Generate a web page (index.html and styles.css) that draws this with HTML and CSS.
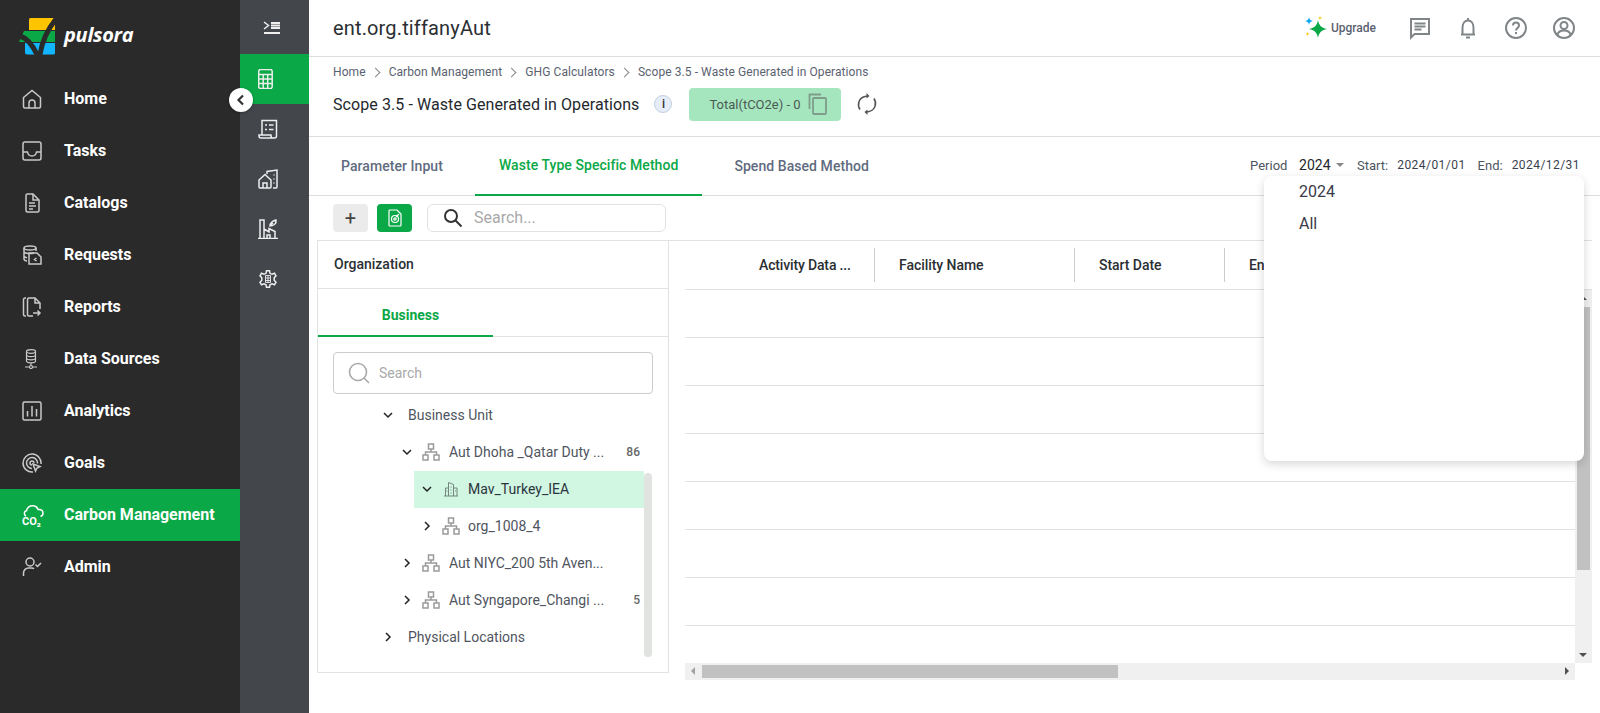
FILE: index.html
```html
<!DOCTYPE html>
<html lang="en">
<head>
    <meta charset="UTF-8">
    <title>Scope 3.5 - Waste Generated in Operations</title>
    <link rel="stylesheet" href="styles.css">
</head>
<body>
<div class="app">
    <aside class="sidebar">
        <div class="brand">
            <svg class="brand-mark" width="38" height="38" viewBox="0 0 38 38">
                <path d="M10 1.500a1.500 1.500 0 0 1 1.500-1.500H36v12H10z" fill="#ffc400"/>
                <path d="M5 13h31v11H0z" fill="#0aa846"/>
                <path d="M6 25h30v10a1.500 1.500 0 0 1-1.500 1.500H8a2 2 0 0 1-2-2z" fill="#12b5ff"/>
                <path d="M1 18c7 2 12 8 17 18.500h3C23 24 28 12 37 1" fill="none" stroke="#2a2a2a" stroke-width="5"/>
            </svg>
            <span class="brand-name">pulsora</span>
        </div>
        <ul class="nav">
            <li class="nav-item">
                <svg class="nav-icon" viewBox="0 0 20 20"><path d="M1.500 8.500 10 1.500l8.500 7v9a1.500 1.500 0 0 1-1.500 1.500H3a1.500 1.500 0 0 1-1.500-1.500z"/><path d="M7 19v-5a3 3 0 0 1 6 0v5"/></svg>
                <span>Home</span>
            </li>
            <li class="nav-item">
                <svg class="nav-icon" viewBox="0 0 20 20"><rect x="1" y="1" width="18" height="18" rx="2"/><path d="M1 11h4.500c.5 3 2 4 4.500 4s4-1 4.500-4H19"/></svg>
                <span>Tasks</span>
            </li>
            <li class="nav-item">
                <svg class="nav-icon" viewBox="0 0 20 20"><path d="M17 7v10.500a1.500 1.500 0 0 1-1.500 1.500h-10A1.500 1.500 0 0 1 4 17.500v-15A1.500 1.500 0 0 1 5.500 1H11z"/><path d="M11 1v6h6M7 10h6M7 13h7M7 16h4"/></svg>
                <span>Catalogs</span>
            </li>
            <li class="nav-item">
                <svg class="nav-icon" viewBox="0 0 20 20"><ellipse cx="8" cy="3" rx="6" ry="2"/><path d="M2 3v11c0 1 1.500 1.800 3 2M14 3v3M2 7c1 1.500 7 2 10 1M2 11c.5 1 1.500 1.500 3 1.800"/><path d="M7 8h8l4 4v7H7zM14.500 13l-2 1.500 2 1.500"/></svg>
                <span>Requests</span>
            </li>
            <li class="nav-item">
                <svg class="nav-icon" viewBox="0 0 20 20"><path d="M4 1H3a1.500 1.500 0 0 0-1.500 1.500v15A1.500 1.500 0 0 0 3 19h1"/><path d="M11 19H7a1.500 1.500 0 0 1-1.500-1.500v-15A1.500 1.500 0 0 1 7 1h6l5 5v6M13 1v5h5"/><path d="M11 16h7M15.500 13.500 18 16l-2.500 2.500"/></svg>
                <span>Reports</span>
            </li>
            <li class="nav-item">
                <svg class="nav-icon thin" viewBox="0 0 20 20"><ellipse cx="9" cy="2.500" rx="4.500" ry="1.800"/><path d="M4.500 2.500v9.500c0 1 2 1.800 4.500 1.800s4.500-.8 4.500-1.800V2.500M4.500 5.800c0 1 2 1.800 4.500 1.800s4.500-.8 4.500-1.800M4.500 9c0 1 2 1.800 4.500 1.800s4.500-.8 4.500-1.800M9 13.800v2.700M3 18h4.500M10.500 18H15"/><circle cx="9" cy="18" r="1.500"/></svg>
                <span>Data Sources</span>
            </li>
            <li class="nav-item">
                <svg class="nav-icon" viewBox="0 0 20 20"><rect x="1" y="1" width="18" height="18" rx="1.500"/><path d="M5.500 10v5.500M10 5v10.500M14.500 8v7.500"/></svg>
                <span>Analytics</span>
            </li>
            <li class="nav-item">
                <svg class="nav-icon" viewBox="0 0 20 20"><path d="M19 11a9 9 0 1 0-8 8M15.500 10.500A5.500 5.500 0 1 0 10 15.500M12 10a2 2 0 1 0-2 2"/><path d="M11 11l7 2.500-3 1.500-1.500 3z"/></svg>
                <span>Goals</span>
            </li>
            <li class="nav-item active">
                <svg class="nav-icon co2-icon" viewBox="0 0 20 20"><path d="M4 11C1.500 10 2 6 4.500 5.800 5 2.500 8 .2 11.500 .8c2.500.3 4 2 4.500 3.700 3-.5 5 1 5 3.500 0 2-1 3-2.500 3.500"/><text x="0" y="20" class="co2-text">CO₂</text></svg>
                <span>Carbon Management</span>
            </li>
            <li class="nav-item">
                <svg class="nav-icon" viewBox="0 0 20 20"><circle cx="8" cy="5" r="4"/><path d="M1.500 19v-3c0-3 2.500-5 5-5h3c1 0 2 .3 2.500.8M13.500 7.500l2 2 3.500-3.500"/></svg>
                <span>Admin</span>
            </li>
        </ul>
    </aside>

    <nav class="rail">
        <div class="rail-item toggle">
            <svg class="rail-icon" viewBox="0 0 20 20"><path d="M2 5l4.500 3.500L2 12" fill="none"/><path d="M9 6h9M9 8.500h9M9 11h9M2 16h16" stroke-width="1.800"/></svg>
        </div>
        <div class="rail-item current">
            <svg class="rail-icon" viewBox="0 0 20 20"><rect x=".7" y=".5" width="13.500" height="19" rx="2"/><path d="M.7 5.500h13.500M.7 10h13.500M.7 14.500h13.500M5.200 5.500V19.500M9.700 5.500V19.500"/></svg>
        </div>
        <div class="rail-item">
            <svg class="rail-icon" viewBox="0 0 20 20"><path d="M4 16V1.500h14.500V17a2 2 0 0 1-2 2H3a2 2 0 0 1-2-2v-1h12v1a2 2 0 0 0 2 2"/><path d="M7 6h2M11 6h4.500M7 10.500h2M11 10.500h4.500"/></svg>
        </div>
        <div class="rail-item">
            <svg class="rail-icon" viewBox="0 0 20 20"><path d="M1 11 7 5.500l6 5.500v7a1 1 0 0 1-1 1H2a1 1 0 0 1-1-1z"/><path d="M5 19v-5h4v5M9 5V2.500L19 1v17a1 1 0 0 1-1 1h-3M15.500 6h1M15.500 10h1M15.500 14h1"/></svg>
        </div>
        <div class="rail-item">
            <svg class="rail-icon" viewBox="0 0 20 20"><path d="M0 19.500h20M2 19V1h4v18M6 10l5 3V9.500l6 3V19M9 19v-3h3v3"/><path d="M12 7c0-3 3-5.500 6-6 .5 3-1.500 6-6 6zM12 7l3-3"/></svg>
        </div>
        <div class="rail-item">
            <svg class="rail-icon" viewBox="0 0 20 20"><path d="M8.500 1h3l.5 2.500 2 1 2.500-1 1.500 2.500-1.800 2v2.500L18 12.500 16.500 15l-2.500-1-2 1-.5 2.500h-3L8 15l-2-1-2.500 1L2 12.500l1.800-2V8L2 6l1.500-2.500 2.500 1 2-1z" transform="translate(0 .8)"/><path d="M7.500 6.500h5v7h-5zM10 6.500v7M7.500 9h5M7.500 11.500h5" stroke-width=".9"/></svg>
        </div>
    </nav>

    <button class="collapse-btn" type="button">
        <svg width="12" height="12" viewBox="0 0 12 12"><path d="M8 1.500 3.500 6 8 10.500" fill="none" stroke="#333" stroke-width="2.200"/></svg>
    </button>

    <main class="content">
        <header class="topbar">
            <h1 class="org-name">ent.org.tiffanyAut</h1>
            <div class="top-actions">
                <div class="upgrade">
                    <svg width="24" height="24" viewBox="0 0 24 24">
                        <path d="M14 4c1 5.500 3 7.500 9 9-6 1.500-8 3.500-9 9-1-5.500-3-7.500-9-9 6-1.500 8-3.500 9-9z" fill="#0aa846"/>
                        <path d="M5 1c.4 2.600 1.400 3.600 4 4-2.600.4-3.600 1.400-4 4-.4-2.600-1.400-3.600-4-4 2.600-.4 3.600-1.400 4-4z" fill="#12a5f0"/>
                        <path d="M16 0c.2 1.200.8 1.800 2 2-1.200.2-1.800.8-2 2-.2-1.200-.8-1.800-2-2 1.200-.2 1.800-.8 2-2zM3.500 16c.2 1.200.8 1.800 2 2-1.200.2-1.800.8-2 2-.2-1.200-.8-1.800-2-2 1.200-.2 1.800-.8 2-2z" fill="#ffc400"/>
                    </svg>
                    <span>Upgrade</span>
                </div>
                <svg class="top-icon" viewBox="0 0 24 24"><path d="M3 3h18v15H6.500L3 21.500z"/><path d="M6.500 7.500h11M6.500 10.500h11M6.500 13.500h7"/></svg>
                <svg class="top-icon" viewBox="0 0 24 24"><path d="M5 18.500h14M6.500 18.500v-7C6.500 7 9 4.500 12 4.500s5.500 2.500 5.500 7v7M12 2v2.500M10 21.500h4"/></svg>
                <svg class="top-icon" viewBox="0 0 24 24"><circle cx="12" cy="12" r="10"/><path d="M9 9.500C9 7.500 10.500 6.500 12 6.500s3 1 3 3c0 2.500-3 2.500-3 5M12 16v2"/></svg>
                <svg class="top-icon" viewBox="0 0 24 24"><circle cx="12" cy="12" r="10"/><circle cx="12" cy="9.500" r="3.500"/><path d="M5.500 19c.5-3 3-4.500 6.500-4.500s6 1.500 6.500 4.500"/></svg>
            </div>
        </header>

        <section class="page-head">
            <div class="breadcrumb">
                <span>Home</span><i class="crumb-sep"></i>
                <span>Carbon Management</span><i class="crumb-sep"></i>
                <span>GHG Calculators</span><i class="crumb-sep"></i>
                <span>Scope 3.5 - Waste Generated in Operations</span>
            </div>
            <div class="title-row">
                <h2 class="page-title">Scope 3.5 - Waste Generated in Operations</h2>
                <span class="info-dot">i</span>
                <div class="total-badge">
                    <span>Total(tCO2e) - 0</span>
                    <svg width="20" height="22" viewBox="0 0 20 22" fill="none" stroke="#7e9c8a" stroke-width="1.800"><path d="M1.500 16V1.500H13"/><rect x="5" y="5" width="13" height="16" rx="1"/></svg>
                </div>
                <svg class="refresh" width="24" height="24" viewBox="0 0 24 24" fill="none" stroke="#555" stroke-width="1.600"><path d="M5 17.500C2 13 3.500 6 10 4.500l3-.5"/><path d="M19 6.500c3 4.500 1.500 11.500-5 13l-3 .5"/><path d="M11.500 1 14.500 4l-3 2.500M12.500 17.500 9.500 20l3 3" fill="#555" stroke="none"/></svg>
            </div>
        </section>

        <section class="tabs-row">
            <div class="tabs">
                <span class="tab">Parameter Input</span>
                <span class="tab selected">Waste Type Specific Method</span>
                <span class="tab">Spend Based Method</span>
            </div>
            <div class="period">
                <span class="period-label">Period</span>
                <span class="period-value">2024<i class="caret"></i></span>
                <span class="date-label">Start:</span>
                <span class="date-value">2024/01/01</span>
                <span class="date-label">End:</span>
                <span class="date-value">2024/12/31</span>
            </div>
        </section>

        <section class="toolbar">
            <button class="tool-btn" type="button">+</button>
            <button class="tool-btn green" type="button">
                <svg width="16" height="18" viewBox="0 0 16 18" fill="none" stroke="#fff" stroke-width="1.200"><path d="M10 1H3a1 1 0 0 0-1 1v14a1 1 0 0 0 1 1h10a1 1 0 0 0 1-1V5z"/><circle cx="8" cy="10" r="3.500"/><circle cx="8" cy="10" r="1.200"/><path d="M9 8l3-3"/></svg>
            </button>
            <div class="tool-search">
                <svg width="20" height="20" viewBox="0 0 20 20" fill="none" stroke="#333" stroke-width="2"><circle cx="8" cy="8" r="6"/><path d="m12.500 12.500 6 6"/></svg>
                <span class="placeholder">Search...</span>
            </div>
        </section>

        <section class="panels">
            <div class="org-panel">
                <div class="org-title">Organization</div>
                <div class="org-tabs"><span class="org-tab">Business</span></div>
                <div class="org-search">
                    <svg width="22" height="22" viewBox="0 0 22 22" fill="none" stroke="#aaa" stroke-width="1.600"><circle cx="10" cy="10" r="8.500"/><path d="m16 16 5 5"/></svg>
                    <span class="placeholder">Search</span>
                </div>
                <div class="tree">
                    <ul class="tree-list">
                        <li class="tree-row lvl1">
                            <svg class="chev" viewBox="0 0 12 12"><path d="M2 4l4 4 4-4"/></svg>
                            <span class="node-name">Business Unit</span>
                        </li>
                        <li class="tree-row lvl2">
                            <svg class="chev" viewBox="0 0 12 12"><path d="M2 4l4 4 4-4"/></svg>
                            <svg class="org-icon" viewBox="0 0 18 18"><rect x="6.500" y="1" width="5" height="5"/><rect x="1" y="12" width="5" height="5"/><rect x="12" y="12" width="5" height="5"/><path d="M9 6v3M3.500 12V9h11v3"/></svg>
                            <span class="node-name">Aut Dhoha _Qatar Duty ...</span>
                            <span class="node-count">86</span>
                        </li>
                        <li class="tree-row lvl3 picked">
                            <svg class="chev" viewBox="0 0 12 12"><path d="M2 4l4 4 4-4"/></svg>
                            <svg class="site-icon" viewBox="0 0 16 16"><path d="M1 15h14M2.500 15V7h3M5.500 15V1.500l5 2V15M10.500 7h3.500v8M7.500 6h1M7.500 9h1M7.500 12h1M3.500 10h1M12 10h1"/></svg>
                            <span class="node-name">Mav_Turkey_IEA</span>
                        </li>
                        <li class="tree-row lvl3">
                            <svg class="chev" viewBox="0 0 12 12"><path d="M4 2l4 4-4 4"/></svg>
                            <svg class="org-icon" viewBox="0 0 18 18"><rect x="6.500" y="1" width="5" height="5"/><rect x="1" y="12" width="5" height="5"/><rect x="12" y="12" width="5" height="5"/><path d="M9 6v3M3.500 12V9h11v3"/></svg>
                            <span class="node-name">org_1008_4</span>
                        </li>
                        <li class="tree-row lvl2">
                            <svg class="chev" viewBox="0 0 12 12"><path d="M4 2l4 4-4 4"/></svg>
                            <svg class="org-icon" viewBox="0 0 18 18"><rect x="6.500" y="1" width="5" height="5"/><rect x="1" y="12" width="5" height="5"/><rect x="12" y="12" width="5" height="5"/><path d="M9 6v3M3.500 12V9h11v3"/></svg>
                            <span class="node-name">Aut NIYC_200 5th Aven...</span>
                        </li>
                        <li class="tree-row lvl2">
                            <svg class="chev" viewBox="0 0 12 12"><path d="M4 2l4 4-4 4"/></svg>
                            <svg class="org-icon" viewBox="0 0 18 18"><rect x="6.500" y="1" width="5" height="5"/><rect x="1" y="12" width="5" height="5"/><rect x="12" y="12" width="5" height="5"/><path d="M9 6v3M3.500 12V9h11v3"/></svg>
                            <span class="node-name">Aut Syngapore_Changi ...</span>
                            <span class="node-count">5</span>
                        </li>
                        <li class="tree-row lvl1">
                            <svg class="chev" viewBox="0 0 12 12"><path d="M4 2l4 4-4 4"/></svg>
                            <span class="node-name">Physical Locations</span>
                        </li>
                    </ul>
                    <div class="tree-scroll"></div>
                </div>
            </div>

            <div class="grid-panel">
                <div class="grid-head">
                    <div class="col col-activity">Activity Data ...</div>
                    <div class="col col-facility">Facility Name</div>
                    <div class="col col-start">Start Date</div>
                    <div class="col col-end">End Date</div>
                </div>
                <div class="grid-main">
                    <div class="grid-rows">
                        <div class="grid-row"></div>
                        <div class="grid-row"></div>
                        <div class="grid-row"></div>
                        <div class="grid-row"></div>
                        <div class="grid-row"></div>
                        <div class="grid-row"></div>
                        <div class="grid-row"></div>
                    </div>
                    <div class="vscroll">
                        <i class="arrow-up"></i>
                        <div class="vthumb"></div>
                        <i class="arrow-down"></i>
                    </div>
                </div>
                <div class="hscroll">
                    <i class="arrow-left"></i>
                    <div class="hthumb"></div>
                    <i class="arrow-right"></i>
                </div>
            </div>
        </section>

        <div class="period-menu">
            <div class="menu-item">2024</div>
            <div class="menu-item">All</div>
        </div>
    </main>
</div>
</body>
</html>
```

FILE: styles.css
```css
* {
    box-sizing: border-box;
}
body {
    margin: 0;
    font-family: Roboto, "Liberation Sans", sans-serif;
    background-color: #fff;
    color: #333;
    overflow: hidden;
}
ul {
    list-style: none;
    margin: 0;
    padding: 0;
}
h1, h2 {
    margin: 0;
    font-weight: 400;
}
i {
    font-style: normal;
}
.app {
    position: relative;
    display: flex;
    height: 713px;
}

/* main sidebar */
.sidebar {
    width: 240px;
    flex-shrink: 0;
    background-color: #2a2a2a;
    color: #fff;
}
.brand {
    display: flex;
    align-items: center;
    height: 73px;
    padding-left: 19px;
}
.brand-mark {
    flex-shrink: 0;
}
.brand-name {
    margin: 0 0 4px 7px;
    font-family: "Open Sans", sans-serif;
    font-size: 20px;
    font-style: italic;
    font-weight: 700;
    letter-spacing: -0.3px;
}
.nav-item {
    display: flex;
    align-items: center;
    gap: 22px;
    height: 52px;
    padding-left: 22px;
    font-size: 16px;
    font-weight: 700;
}
.nav-item span {
    margin-bottom: 2px;
}
.nav-item.active {
    background-color: #0aa846;
}
.nav-icon {
    width: 20px;
    height: 20px;
    flex-shrink: 0;
    fill: none;
    stroke: #c9c9c9;
    stroke-width: 1.500;
}
.nav-icon.thin {
    stroke-width: 1.200;
}
.nav-item.active .nav-icon {
    stroke: #fff;
}
.co2-icon {
    overflow: visible;
}
.co2-text {
    fill: #fff;
    stroke: none;
    font-size: 11px;
    font-weight: 700;
}

/* icon rail */
.rail {
    width: 69px;
    flex-shrink: 0;
    background-color: #43474b;
}
.rail-item {
    display: flex;
    align-items: center;
    height: 50px;
    padding-left: 18px;
}
.rail-item.toggle {
    height: 54px;
    padding-left: 22px;
}
.rail-item.current {
    background-color: #0aa846;
}
.rail-icon {
    width: 20px;
    height: 20px;
    fill: none;
    stroke: #eee;
    stroke-width: 1.500;
}
.collapse-btn {
    position: absolute;
    left: 229px;
    top: 88px;
    z-index: 3;
    display: flex;
    align-items: center;
    justify-content: center;
    width: 24px;
    height: 24px;
    padding: 0;
    border: none;
    border-radius: 50%;
    background-color: #fff;
    box-shadow: 0 1px 3px rgba(0, 0, 0, 0.3);
}

/* content */
.content {
    position: relative;
    flex: 1;
    min-width: 0;
}
.topbar {
    display: flex;
    align-items: center;
    justify-content: space-between;
    height: 57px;
    padding: 0 24px;
    border-bottom: 1px solid #ddd;
}
.org-name {
    font-size: 20px;
    letter-spacing: 0.15px;
    color: #2b2f33;
}
.top-actions {
    display: flex;
    align-items: center;
    gap: 24px;
}
.upgrade {
    display: flex;
    align-items: center;
    gap: 3px;
    margin-right: 8px;
    font-size: 12px;
    font-weight: 500;
    color: #5a6270;
}
.top-icon {
    width: 24px;
    height: 24px;
    fill: none;
    stroke: #808588;
    stroke-width: 2;
}
.page-head {
    height: 80px;
    padding: 7px 24px 0;
    border-bottom: 1px solid #ddd;
}
.breadcrumb {
    display: flex;
    align-items: center;
    height: 16px;
    font-size: 12px;
    letter-spacing: 0.08px;
    color: #5a6270;
}
.crumb-sep {
    width: 7px;
    height: 7px;
    margin: 0 10px 0 6px;
    border-top: 1.500px solid #888;
    border-right: 1.500px solid #888;
    transform: rotate(45deg);
}
.title-row {
    display: flex;
    align-items: center;
    height: 36px;
    margin-top: 6px;
}
.page-title {
    font-size: 16px;
    letter-spacing: 0.08px;
    color: #24282c;
}
.info-dot {
    display: flex;
    align-items: center;
    justify-content: center;
    width: 18px;
    height: 18px;
    margin-left: 15px;
    border: 1px solid #c3cfe0;
    border-radius: 50%;
    background-color: #e6edf8;
    font-size: 12px;
    font-weight: 500;
}
.total-badge {
    display: flex;
    align-items: center;
    gap: 7px;
    width: 152px;
    height: 33px;
    margin-left: 17px;
    padding-left: 20px;
    border-radius: 4px;
    background-color: #a6e6bf;
    font-size: 13px;
    color: #4a5a55;
}
.refresh {
    margin-left: 14px;
}
.tabs-row {
    display: flex;
    align-items: center;
    justify-content: space-between;
    height: 59px;
    padding-left: 8px;
    border-bottom: 1px solid #ddd;
}
.tabs {
    display: flex;
    align-self: stretch;
}
.tab {
    display: flex;
    align-items: center;
    margin-top: -1px;
    padding: 0 24px;
    font-size: 14px;
    font-weight: 500;
    letter-spacing: 0.06px;
    color: #5f6b80;
    margin-right: 8px;
}
.tab.selected {
    color: #0aa846;
    border-bottom: 2px solid #0aa846;
    margin-bottom: -1px;
}
.period {
    display: flex;
    align-items: center;
    height: 20px;
    margin-top: -2px;
    padding-right: 20px;
    font-size: 13px;
    color: #4d5560;
}
.period-label {
    width: 49px;
}
.period-value {
    display: flex;
    align-items: center;
    width: 58px;
    font-size: 14px;
    color: #24282c;
}
.caret {
    margin-left: 5px;
    border-left: 4px solid transparent;
    border-right: 4px solid transparent;
    border-top: 4px solid #888;
}
.date-label {
    margin-right: 9px;
    font-size: 13px;
}
.date-value {
    margin-right: 12px;
    font-size: 12px;
    letter-spacing: 0.45px;
    color: #3a3f50;
}
.date-value:last-child {
    margin-right: 0;
}
.toolbar {
    display: flex;
    align-items: center;
    height: 44px;
    padding: 0 24px 0 24px;
}
.tool-btn {
    display: flex;
    align-items: center;
    justify-content: center;
    width: 35px;
    height: 28px;
    margin-right: 9px;
    padding: 0;
    border: none;
    border-radius: 4px;
    background-color: #ebebeb;
    font-family: inherit;
    font-size: 20px;
    color: #444;
}
.tool-btn.green {
    background-color: #0aa846;
    margin-right: 15px;
}
.tool-search {
    display: flex;
    align-items: center;
    gap: 11px;
    width: 239px;
    height: 28px;
    padding-left: 15px;
    border: 1px solid #e2e2e2;
    border-radius: 6px;
}
.placeholder {
    margin-bottom: 1px;
    font-size: 16px;
    color: #a9a9a9;
}

/* organization panel */
.panels {
    display: flex;
    height: 440px;
    padding: 0 8px;
}
.org-panel {
    width: 352px;
    height: 433px;
    flex-shrink: 0;
    border: 1px solid #e2e2e2;
}
.org-title {
    display: flex;
    align-items: center;
    height: 48px;
    padding: 0 0 2px 16px;
    border-bottom: 1px solid #e2e2e2;
    font-size: 14px;
    font-weight: 500;
    color: #2b2f33;
}
.org-tabs {
    height: 48px;
    border-bottom: 1px solid #e2e2e2;
}
.org-tab {
    display: flex;
    align-items: center;
    justify-content: center;
    width: 175px;
    height: 48px;
    padding: 6px 0 0 10px;
    border-bottom: 2px solid #0aa846;
    font-size: 14px;
    font-weight: 700;
    color: #0aa846;
}
.org-search {
    display: flex;
    align-items: center;
    gap: 9px;
    width: 320px;
    height: 42px;
    margin: 15px 0 3px 15px;
    padding-left: 14px;
    border: 1px solid #ccc;
    border-radius: 4px;
}
.org-search .placeholder {
    font-size: 14px;
}
.tree {
    display: flex;
    align-items: flex-start;
}
.tree-list {
    width: 326px;
    flex-shrink: 0;
}
.tree-row {
    display: flex;
    align-items: center;
    height: 37px;
    padding-bottom: 2px;
    font-size: 14px;
    color: #4f5560;
}
.tree-row.lvl1 {
    padding-left: 62px;
}
.tree-row.lvl2 {
    padding-left: 81px;
}
.tree-row.lvl3 {
    padding-left: 101px;
}
.tree-row.picked {
    margin-left: 96px;
    padding-left: 5px;
    background-color: #d1f6e1;
    color: #2b3540;
}
.chev {
    width: 16px;
    height: 12px;
    flex-shrink: 0;
    fill: none;
    stroke: #222;
    stroke-width: 1.500;
}
.lvl1 .chev {
    margin-right: 12px;
}
.org-icon {
    width: 18px;
    height: 18px;
    margin: 0 9px 0 7px;
    fill: none;
    stroke: #9a9a9a;
    stroke-width: 1.500;
}
.lvl3 .org-icon {
    margin-right: 8px;
}
.site-icon {
    width: 16px;
    height: 16px;
    margin: 0 9px 0 8px;
    fill: none;
    stroke: #6a7a70;
    stroke-width: 0.900;
}
.node-name {
    flex: 1;
    white-space: nowrap;
}
.node-count {
    padding-right: 4px;
    font-size: 12px;
    font-weight: 500;
    color: #666;
}
.tree-scroll {
    width: 8px;
    height: 184px;
    margin-top: 76px;
    border-radius: 4px;
    background-color: #e0e3e0;
}

/* data grid */
.grid-panel {
    flex: 1;
    min-width: 0;
    display: flex;
    flex-direction: column;
}
.grid-head {
    position: relative;
    display: flex;
    align-items: center;
    height: 50px;
    padding-left: 16px;
    border-top: 1px solid #e2e2e2;
    border-bottom: 1px solid #e2e2e2;
    font-size: 14px;
    font-weight: 500;
    letter-spacing: -0.05px;
    color: #2b2f33;
}
.grid-head::after {
    content: "";
    position: absolute;
    left: 0;
    top: 47px;
    width: 16px;
    height: 2px;
    background-color: #fff;
}
.col {
    display: flex;
    align-items: center;
    height: 34px;
    padding-left: 24px;
    border-right: 1px solid #ccc;
    white-space: nowrap;
}
.col-activity {
    width: 190px;
    padding-left: 74px;
    letter-spacing: -0.15px;
}
.col-facility {
    width: 200px;
}
.col-start {
    width: 150px;
}
.col-end {
    flex: 1;
    border-right: none;
}
.grid-main {
    display: flex;
    height: 373px;
    padding-left: 16px;
}
.grid-rows {
    flex: 1;
}
.grid-row {
    height: 48px;
    border-bottom: 1px solid #e2e2e2;
}
.vscroll {
    position: relative;
    width: 17px;
    background-color: #f0f0f0;
}
.vthumb {
    position: absolute;
    left: 2px;
    top: 17px;
    width: 13px;
    height: 263px;
    background-color: #c1c1c1;
}
.arrow-up {
    position: absolute;
    left: 4px;
    top: 6px;
    border-left: 4px solid transparent;
    border-right: 4px solid transparent;
    border-bottom: 4px solid #505050;
}
.arrow-down {
    position: absolute;
    left: 4px;
    bottom: 6px;
    border-left: 4px solid transparent;
    border-right: 4px solid transparent;
    border-top: 4px solid #505050;
}
.hscroll {
    position: relative;
    height: 17px;
    margin: 0 17px 0 16px;
    background-color: #f0f0f0;
}
.hthumb {
    position: absolute;
    left: 17px;
    top: 2px;
    width: 416px;
    height: 13px;
    background-color: #c1c1c1;
}
.arrow-left {
    position: absolute;
    left: 6px;
    top: 4px;
    border-top: 4px solid transparent;
    border-bottom: 4px solid transparent;
    border-right: 4px solid #a0a0a0;
}
.arrow-right {
    position: absolute;
    right: 6px;
    top: 4px;
    border-top: 4px solid transparent;
    border-bottom: 4px solid transparent;
    border-left: 4px solid #505050;
}

/* period dropdown */
.period-menu {
    position: absolute;
    left: 955px;
    top: 176px;
    z-index: 2;
    width: 320px;
    height: 285px;
    border-radius: 8px;
    background-color: #fff;
    box-shadow: 0 3px 10px rgba(0, 0, 0, 0.16);
}
.menu-item {
    display: flex;
    align-items: center;
    height: 30px;
    margin-bottom: 2px;
    padding-left: 35px;
    font-size: 16px;
    color: #3a3a48;
}
```
